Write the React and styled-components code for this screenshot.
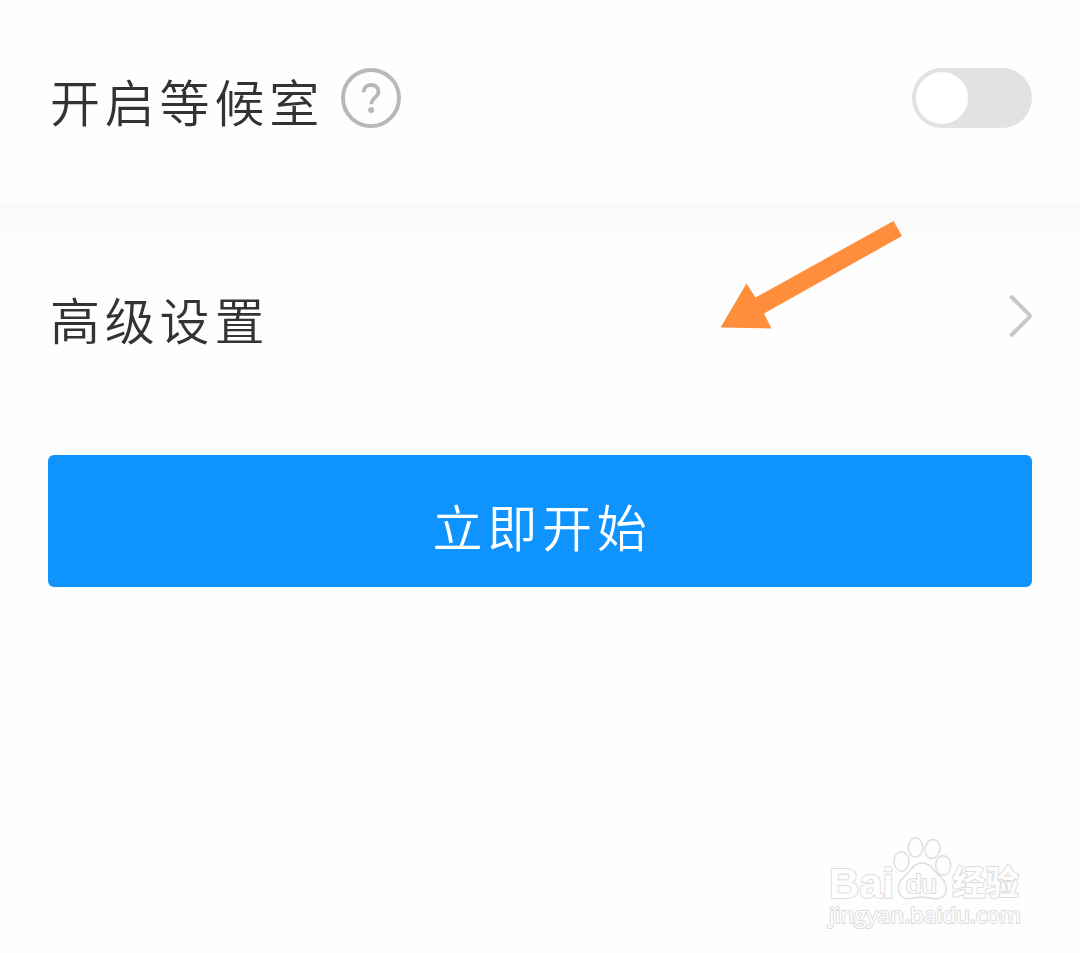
import React from "react";
import styled, { createGlobalStyle } from "styled-components";

const GlobalStyle = createGlobalStyle`
  * { box-sizing: border-box; }
  body {
    margin: 0;
    background: #fefefe;
    font-family: "Noto Sans CJK SC", sans-serif;
  }
`;

const Page = styled.main`
  position: relative;
  width: 1080px;
  height: 953px;
  overflow: hidden;
  display: flex;
  flex-direction: column;
  background: #fefefe;
`;

const Row = styled.section`
  display: flex;
  align-items: center;
  justify-content: space-between;
  height: ${(p) => p.$height}px;
  padding: 0 48px ${(p) => p.$bottom}px 50px;
`;

const LabelGroup = styled.div`
  display: flex;
  align-items: center;
  gap: 17px;
`;

const Label = styled.span`
  font-size: 50px;
  line-height: 60px;
  font-weight: 350;
  letter-spacing: 4.8px;
  color: #333;
  white-space: nowrap;
  padding-top: 4px;
`;

const HelpIcon = styled.svg`
  display: block;
  width: 60px;
  height: 60px;
`;

const Switch = styled.button`
  display: flex;
  align-items: center;
  width: 120px;
  height: 60px;
  padding: 0 4px;
  border: 0;
  border-radius: 30px;
  background: #e2e2e2;
`;

const Knob = styled.span`
  width: 52px;
  height: 52px;
  border-radius: 50%;
  background: #fff;
`;

const Divider = styled.div`
  height: 30px;
  background: #fafafa;
`;

const Chevron = styled.svg`
  display: block;
  width: 24px;
  height: 44px;
`;

const StartButton = styled.button`
  display: flex;
  align-items: center;
  justify-content: center;
  height: 132px;
  margin: 56px 48px 0;
  padding: 7px 0 0 4px;
  border: 0;
  border-radius: 6px;
  background: #0e93ff;
  color: #fff;
  font: 350 50px/60px "Noto Sans CJK SC", sans-serif;
  letter-spacing: 4.8px;
`;

const Pointer = styled.svg`
  position: absolute;
  left: 710px;
  top: 210px;
  width: 200px;
  height: 130px;
`;

const Watermark = styled.svg`
  position: absolute;
  left: 820px;
  top: 830px;
  width: 210px;
  height: 105px;
  fill: #fefefe;
  stroke: #dcdcdc;
  stroke-width: 1.4;
  text {
    paint-order: stroke;
    stroke-width: 2;
    stroke-linejoin: round;
  }
`;

export default function App() {
  return (
    <>
      <GlobalStyle />
      <Page>
        <Row $height={203} $bottom={7}>
          <LabelGroup>
            <Label>开启等候室</Label>
            <HelpIcon viewBox="0 0 60 60" fill="none">
              <circle cx="30" cy="30" r="28" stroke="#b8b8b8" strokeWidth="4" />
              <path
                d="M22.6 24.3C22.6 19.7 25.6 17 30.1 17C34.6 17 37.5 19.8 37.5 23.8C37.5 29.2 30.3 29.7 30.3 36.2"
                stroke="#b8b8b8"
                strokeWidth="3.8"
              />
              <circle cx="30.2" cy="42" r="3" fill="#b8b8b8" />
            </HelpIcon>
          </LabelGroup>
          <Switch role="switch" aria-checked="false" aria-label="开启等候室">
            <Knob />
          </Switch>
        </Row>
        <Divider />
        <Row $height={166} $bottom={1}>
          <Label>高级设置</Label>
          <Chevron viewBox="0 0 24 44" fill="none">
            <path
              d="M3.5 3L21 20.4Q22.5 22 21 23.6L3.5 41"
              stroke="#c8c8c8"
              strokeWidth="4"
              strokeLinecap="round"
            />
          </Chevron>
        </Row>
        <StartButton>立即开始</StartButton>

        <Pointer viewBox="710 210 200 130">
          <path
            d="M720.5 327.5L746.5 283.5L755.5 297.5L893.5 221L902 236L764 313.5L771.5 328.5Z"
            fill="#ff8e3c"
          />
        </Pointer>

        <Watermark viewBox="820 830 210 105">
          <text
            x="829" y="897.5" fontSize="43" fontWeight="700" textLength="65"
            lengthAdjust="spacingAndGlyphs" fontFamily="Liberation Sans, sans-serif"
          >Bai</text>
          <ellipse cx="901.5" cy="861.5" rx="7.5" ry="9.7" />
          <ellipse cx="915.5" cy="847.5" rx="7.2" ry="9.8" />
          <ellipse cx="932.5" cy="849" rx="7.5" ry="9.5" transform="rotate(12 932.5 849)" />
          <ellipse cx="943.2" cy="865.5" rx="7.5" ry="9.7" />
          <path d="M922 863C913 863 911 871 904.5 876.5C896.5 883 897 893 903 897.5C909 901 915 897 922 897C929 897 936 901 942 897.5C948 893 948 883 940 876.5C933.5 871 931 863 922 863Z" />
          <text
            x="906" y="893" fontSize="26" textLength="31" lengthAdjust="spacingAndGlyphs"
            fontFamily="Liberation Sans, sans-serif"
          >du</text>
          <text
            x="952" y="895" fontSize="34" fontWeight="700" textLength="67"
            lengthAdjust="spacingAndGlyphs" fontFamily="Noto Sans CJK SC, sans-serif"
          >经验</text>
          <text
            x="829" y="923" fontSize="22" textLength="192" lengthAdjust="spacingAndGlyphs"
            fontFamily="Open Sans, sans-serif"
          >jingyan.baidu.com</text>
        </Watermark>
      </Page>
    </>
  );
}
